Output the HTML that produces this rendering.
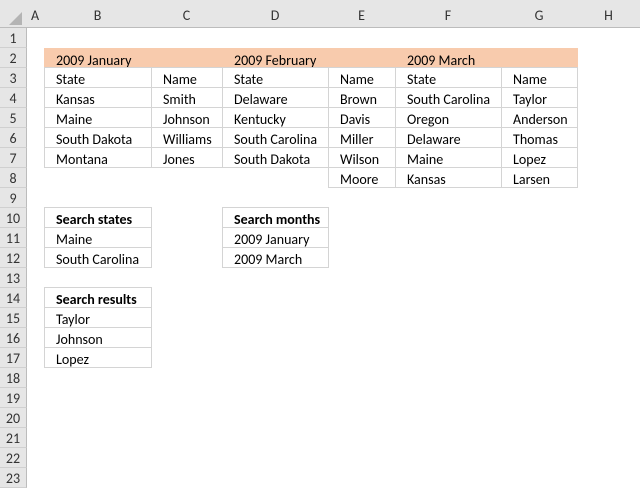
<!DOCTYPE html>
<html><head><style>
*{margin:0;padding:0;box-sizing:border-box}
body{width:640px;height:487px;overflow:hidden;background:#fff;font-family:Calibri,"Liberation Sans",sans-serif;font-size:14px;color:#000;position:relative}
.ch{position:absolute;top:0;height:28px;background:#e6e6e6;border-right:1px solid #c8c8c8;border-bottom:1px solid #bcbcbc;text-align:center;line-height:31px;color:#333;font-size:14px}
.rh{position:absolute;left:0;width:27px;height:20px;background:#e6e6e6;border-right:1px solid #bcbcbc;border-bottom:1px solid #d0d0d0;text-align:center;line-height:22px;color:#333;font-size:14px}
.c{position:absolute;height:21px;border:1px solid #d4d4d4;padding-left:11px;padding-top:2px;line-height:19px;white-space:nowrap}
.t{position:absolute;height:20px;line-height:19px;padding-top:3px;padding-left:12px;white-space:nowrap}
b{font-weight:bold}
</style></head><body>
<div class="ch" style="left:0;width:27px;"><svg width="27" height="28" style="position:absolute;left:0;top:0"><polygon points="22,12 22,25 9,25" fill="#b4b4b4"/></svg></div>
<div class="ch" style="left:26px;width:19px">A</div>
<div class="ch" style="left:44px;width:108px">B</div>
<div class="ch" style="left:151px;width:72px">C</div>
<div class="ch" style="left:222px;width:107px">D</div>
<div class="ch" style="left:328px;width:68px">E</div>
<div class="ch" style="left:395px;width:107px">F</div>
<div class="ch" style="left:501px;width:77px">G</div>
<div class="ch" style="left:577px;width:63px;border-right:none">H</div>

<div class="rh" style="top:28px">1</div><div class="rh" style="top:48px">2</div><div class="rh" style="top:68px">3</div><div class="rh" style="top:88px">4</div><div class="rh" style="top:108px">5</div><div class="rh" style="top:128px">6</div><div class="rh" style="top:148px">7</div><div class="rh" style="top:168px">8</div><div class="rh" style="top:188px">9</div><div class="rh" style="top:208px">10</div><div class="rh" style="top:228px">11</div><div class="rh" style="top:248px">12</div><div class="rh" style="top:268px">13</div><div class="rh" style="top:288px">14</div><div class="rh" style="top:308px">15</div><div class="rh" style="top:328px">16</div><div class="rh" style="top:348px">17</div><div class="rh" style="top:368px">18</div><div class="rh" style="top:388px">19</div><div class="rh" style="top:408px">20</div><div class="rh" style="top:428px">21</div><div class="rh" style="top:448px">22</div><div class="rh" style="top:468px">23</div>

<div style="position:absolute;left:44px;top:48px;width:534px;height:20px;background:#f8cbad"></div>
<div class="t" style="left:44px;top:48px">2009 January</div>
<div class="t" style="left:222px;top:48px">2009 February</div>
<div class="t" style="left:395px;top:48px">2009 March</div>

<div class="c" style="left:44px;top:67px;width:108px">State</div>
<div class="c" style="left:151px;top:67px;width:72px">Name</div>
<div class="c" style="left:222px;top:67px;width:107px">State</div>
<div class="c" style="left:328px;top:67px;width:68px">Name</div>
<div class="c" style="left:395px;top:67px;width:107px">State</div>
<div class="c" style="left:501px;top:67px;width:77px">Name</div>

<div class="c" style="left:44px;top:87px;width:108px">Kansas</div>
<div class="c" style="left:151px;top:87px;width:72px">Smith</div>
<div class="c" style="left:222px;top:87px;width:107px">Delaware</div>
<div class="c" style="left:328px;top:87px;width:68px">Brown</div>
<div class="c" style="left:395px;top:87px;width:107px">South Carolina</div>
<div class="c" style="left:501px;top:87px;width:77px">Taylor</div>

<div class="c" style="left:44px;top:107px;width:108px">Maine</div>
<div class="c" style="left:151px;top:107px;width:72px">Johnson</div>
<div class="c" style="left:222px;top:107px;width:107px">Kentucky</div>
<div class="c" style="left:328px;top:107px;width:68px">Davis</div>
<div class="c" style="left:395px;top:107px;width:107px">Oregon</div>
<div class="c" style="left:501px;top:107px;width:77px">Anderson</div>

<div class="c" style="left:44px;top:127px;width:108px">South Dakota</div>
<div class="c" style="left:151px;top:127px;width:72px">Williams</div>
<div class="c" style="left:222px;top:127px;width:107px">South Carolina</div>
<div class="c" style="left:328px;top:127px;width:68px">Miller</div>
<div class="c" style="left:395px;top:127px;width:107px">Delaware</div>
<div class="c" style="left:501px;top:127px;width:77px">Thomas</div>

<div class="c" style="left:44px;top:147px;width:108px">Montana</div>
<div class="c" style="left:151px;top:147px;width:72px">Jones</div>
<div class="c" style="left:222px;top:147px;width:107px">South Dakota</div>
<div class="c" style="left:328px;top:147px;width:68px">Wilson</div>
<div class="c" style="left:395px;top:147px;width:107px">Maine</div>
<div class="c" style="left:501px;top:147px;width:77px">Lopez</div>

<div class="c" style="left:328px;top:167px;width:68px">Moore</div>
<div class="c" style="left:395px;top:167px;width:107px">Kansas</div>
<div class="c" style="left:501px;top:167px;width:77px">Larsen</div>

<div class="c" style="left:44px;top:207px;width:108px"><b>Search states</b></div>
<div class="c" style="left:44px;top:227px;width:108px">Maine</div>
<div class="c" style="left:44px;top:247px;width:108px">South Carolina</div>

<div class="c" style="left:222px;top:207px;width:107px"><b>Search months</b></div>
<div class="c" style="left:222px;top:227px;width:107px">2009 January</div>
<div class="c" style="left:222px;top:247px;width:107px">2009 March</div>

<div class="c" style="left:44px;top:287px;width:108px"><b>Search results</b></div>
<div class="c" style="left:44px;top:307px;width:108px">Taylor</div>
<div class="c" style="left:44px;top:327px;width:108px">Johnson</div>
<div class="c" style="left:44px;top:347px;width:108px">Lopez</div>
</body></html>
